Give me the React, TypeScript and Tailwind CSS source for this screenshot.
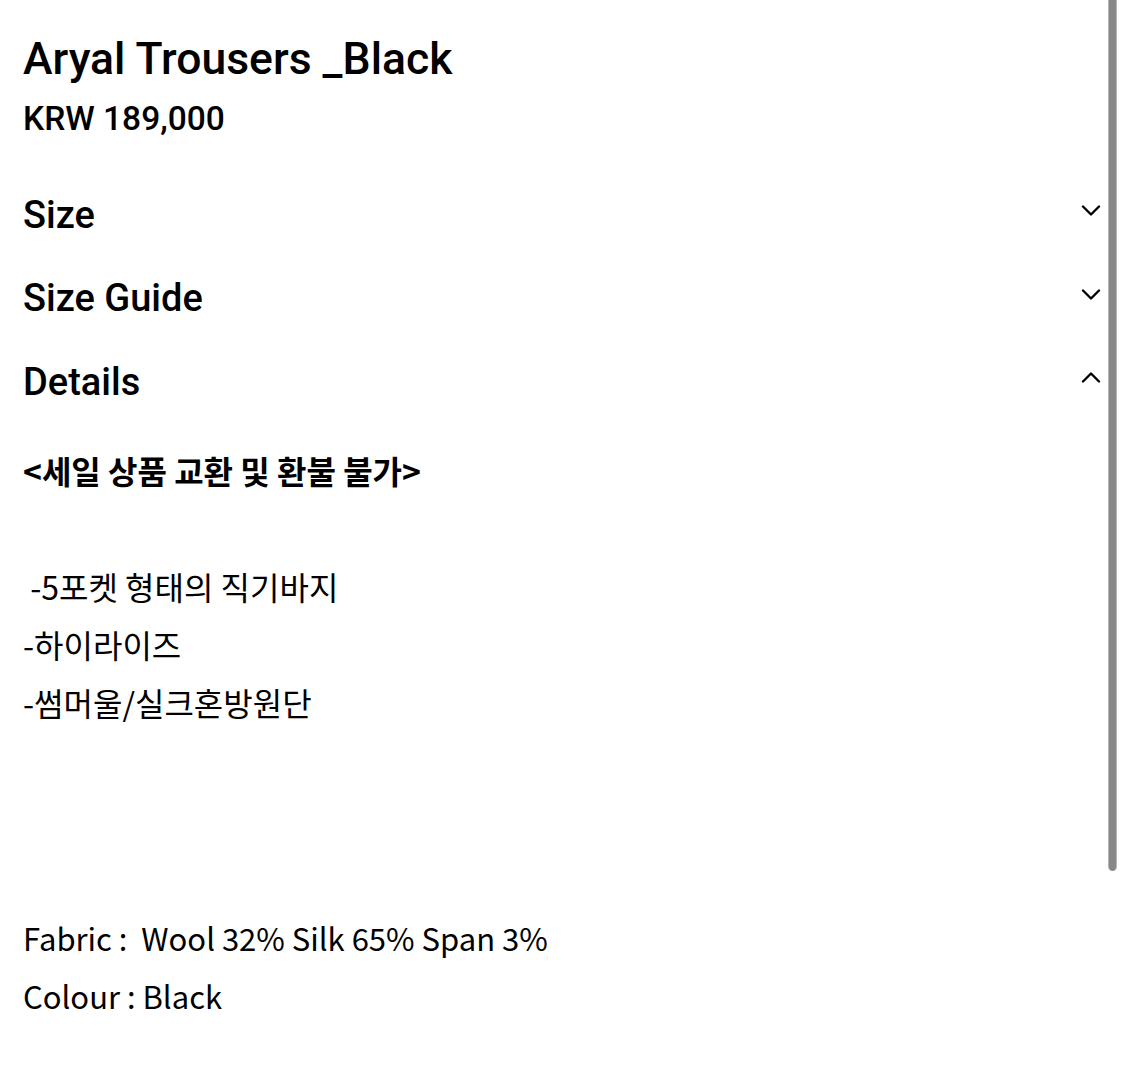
import React from "react";

const Chevron = ({ up = false }: { up?: boolean }) => (
  <svg width="20" height="11" viewBox="0 0 20 11" className="mb-[8px] shrink-0">
    <polyline
      points={up ? "2,9.5 10,1.5 18,9.5" : "2,1.5 10,9.5 18,1.5"}
      fill="none"
      stroke="#000"
      strokeWidth="2.4"
      strokeLinecap="round"
      strokeLinejoin="round"
    />
  </svg>
);

const Row = ({ label, up }: { label: string; up?: boolean }) => (
  <div className="flex h-[83.5px] items-center justify-between">
    <span className="text-[38px] leading-[44px] font-medium">{label}</span>
    <Chevron up={up} />
  </div>
);

export default function App() {
  return (
    <div className="relative h-[1092px] w-[1125px] overflow-hidden bg-white text-black">
      <div className="pl-[23px] pr-[24px] pt-[33px] font-['Roboto',sans-serif]">
        <h1 className="text-[44.5px] leading-[52px] font-medium">Aryal Trousers _Black</h1>
        <div className="mt-[16px] text-[33.5px] leading-[36px] font-medium">KRW 189,000</div>
        <div className="mt-[36px]">
          <Row label="Size" />
          <Row label="Size Guide" />
          <Row label="Details" up />
        </div>
        <div className="mt-[17px] font-['Noto_Sans_CJK_KR','Noto_Sans',sans-serif] text-[32px] leading-[58px]">
          <p className="font-bold">&lt;세일 상품 교환 및 환불 불가&gt;</p>
          <p>&nbsp;</p>
          <p>&nbsp;-5포켓 형태의 직기바지</p>
          <p>-하이라이즈</p>
          <p>-썸머울/실크혼방원단</p>
          <p>&nbsp;</p>
          <p>&nbsp;</p>
          <p>&nbsp;</p>
          <p className="mt-[4px] text-[31px]">Fabric :&nbsp; Wool 32% Silk 65% Span 3%</p>
          <p className="text-[31px]">Colour : Black</p>
        </div>
      </div>
      <div className="absolute right-[8px] top-0 h-[871px] w-[9px] rounded-b-full border-x border-[#b5b5b5] bg-[#888]" />
    </div>
  );
}
